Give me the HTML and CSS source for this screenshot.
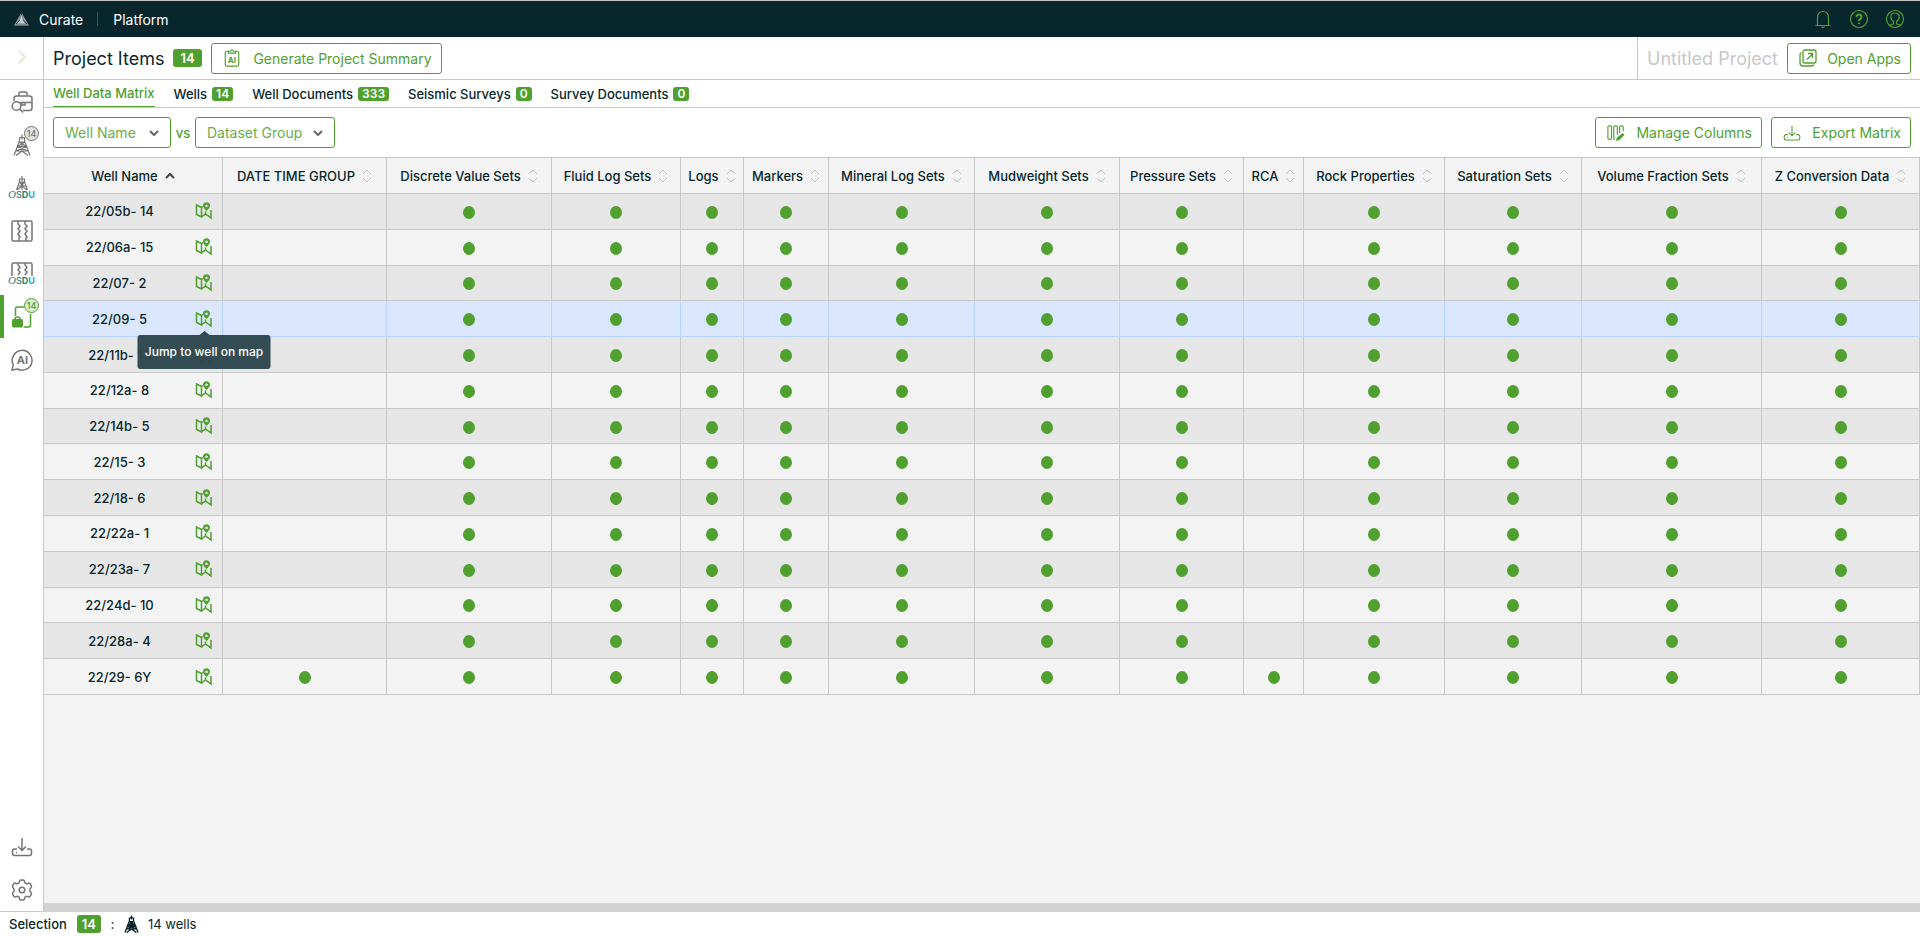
FILE: index.html
```html
<!DOCTYPE html>
<html lang="en">

<head>
  <meta charset="UTF-8">
  <meta name="viewport" content="width=device-width, initial-scale=1.0">
  <title>Curate</title>
  <link rel="stylesheet" href="styles.css">
</head>
<body>
  <!-- Shared icons -->
  <svg class="sprite" aria-hidden="true">
    <symbol id="derrick" viewBox="0 0 18 22">
      <path d="M6.500 3.500h5M9 .5v5M6.500 3.500v3.500L1 21.500M11.500 3.500v3.500L17 21.500M5.500 8h7M4.500 12.500h9M3 17h12M12 8l-7.500 4.500L15 17M6 8l7.500 4.500L3 17M9 8v4.500M3 21.500L9 17l6 4.500" />
    </symbol>
    <symbol id="export" viewBox="0 0 22 20">
      <path d="M11 1v12M7 9.500l4 4 4-4M6 12H3.500Q1.500 12 1.500 14v2.500q0 2 2 2h15q2 0 2-2V14q0-2-2-2H16M5 15.500h1" />
    </symbol>
    <symbol id="map" viewBox="0 0 18 18">
      <path d="M6.500 15L1.500 12.500V3L6.500 5.500zM6.500 15l4-3 5.500 4V8M10.500 12V9.500M6.500 5.500L8 4.500M13.500 14l2.500 2" />
      <path class="solid" fill-rule="evenodd" d="M11.500 9Q8 5.800 8 3.800a3.500 3.500 0 0 1 7 0Q15 5.800 11.500 9zM11.500 2.500a1.300 1.300 0 1 0 .01 0z" />
    </symbol>
    <symbol id="sort" viewBox="0 0 10 14">
      <path d="M1 5l4-4 4 4M1 9l4 4 4-4" />
    </symbol>
    <symbol id="chevron" viewBox="0 0 10 6">
      <path d="M1 1l4 4 4-4" />
    </symbol>
  </svg>

  <!-- Top Bar -->
  <header class="topbar">
    <svg class="logo" viewBox="0 0 16 14"><path d="M8 0L6 8 0 14z" fill="#8d9da1"/><path d="M8 0l2 8 6 6z" fill="#8d9da1"/><path d="M7.500 3h1l1.500 6 3 3H3l3-3z" fill="#c4cdcf"/><path d="M1 12.500h14L16 14H0z" fill="#a7b3b6"/></svg>
    <a href="#">Curate</a>
    <span class="divider"></span>
    <a href="#">Platform</a>
    <div class="topbar-icons">
      <button aria-label="Notifications"><svg viewBox="0 0 20 20"><path d="M2.500 16.500h15M4.500 16.500V9q0-6.500 5.500-6.500T15.500 9v7.500M8.500 17.500q1.500 2 3 0"/></svg></button>
      <button aria-label="Help"><svg viewBox="0 0 20 20"><circle cx="10" cy="10" r="8.500"/><path class="thick" d="M7.500 8q0-2.500 2.500-2.500T12.500 8Q12.500 9 11.300 9.800T10 12M10 13.500v1.500"/></svg></button>
      <button aria-label="Account"><svg viewBox="0 0 20 20"><circle cx="10" cy="10" r="8.500"/><path d="M4.500 16.200q1.500-.7 4-1.200v-2.500Q5.800 11 5.800 7.800q0-3.800 4.200-3.800t4.200 3.800q0 3.200-2.700 4.700V15q2.500.5 4 1.200"/></svg></button>
    </div>
  </header>

  <div class="main">
    <!-- Side Bar -->
    <nav class="sidebar">
      <button class="expand" aria-label="Expand"><svg viewBox="0 0 8 14"><path d="M1 1l6 6-6 6"/></svg></button>
      <button class="side-item" aria-label="Search">
        <svg viewBox="0 0 22 22"><path d="M8 5V2.500Q8 1 9.500 1h5Q16 1 16 2.500V5M3 10V7.500Q3 5 5.500 5h13Q21 5 21 7.500V17q0 2.500-2.500 2.500H12M9 11.500h12M11 11.500v2.500h3v-2.500M8.500 18l3.500 3.500"/><circle cx="5.500" cy="15" r="4.300"/></svg>
      </button>
      <button class="side-item" aria-label="Wells">
        <svg class="tower"><use href="#derrick"/></svg>
        <span class="count">14</span>
      </button>
      <button class="side-item stacked" aria-label="OSDU wells">
        <svg class="tower-small" viewBox="0 0 14 14"><path d="M4 3h6M7 0v5M4.500 3v3L1.500 14M9.500 3v3l3 8M4 6h6M3 10h8M5 6l2 4 2-4M7 6v8M2 14l5-4 5 4"/></svg>
        <span class="osdu"><i>O</i>S<b>D</b><b class="u">U</b></span>
      </button>
      <button class="side-item" aria-label="Seismic">
        <svg viewBox="0 0 22 22"><rect x="1" y="1" width="20" height="20" rx="1.500"/><path d="M7 1v3l2 2-2 3 2 2-2 3 2 3-1 1v3M14 1v3l2 2-2 3 2 2-2 3 2 3-1 1v3"/></svg>
      </button>
      <button class="side-item stacked" aria-label="OSDU seismic">
        <svg class="half" viewBox="0 0 22 14"><path d="M1 14V2.500Q1 1 2.500 1h17Q21 1 21 2.500V14M7 1v2l2 2-2 3 2 2-2 3M14 1v2l2 2-2 3 2 2-2 3"/></svg>
        <span class="osdu"><i>O</i>S<b>D</b><b class="u">U</b></span>
      </button>
      <button class="side-item active" aria-label="Project items">
        <svg viewBox="0 0 22 22"><path d="M4.500 10V3Q4.500 1 6.500 1H13M19.500 8v11q0 2-2 2H13M4 14v-1q0-2 2.500-2T9 13v1"/><rect class="solid" x="1" y="13" width="11" height="8.500" rx="1.500"/></svg>
        <span class="count">14</span>
      </button>
      <button class="side-item" aria-label="Assistant">
        <svg viewBox="0 0 22 22"><path d="M1 21l1.200-5.500A9.900 9.900 0 1 1 6.500 20z"/><text x="11.500" y="15">AI</text></svg>
      </button>
      <span class="spacer"></span>
      <button class="side-item" aria-label="Export">
        <svg class="export"><use href="#export"/></svg>
      </button>
      <button class="side-item" aria-label="Settings">
        <svg viewBox="0 0 22 22"><path d="M8.500 2.500Q8.500 1 10 1h2q1.500 0 1.500 1.500 0 1.500 1.500 2 1 .5 2-.2 1.500-.7 2.300.5l1 1.800q.7 1.300-.5 2.200-1 .7-1 2.200t1 2.200q1.200.9.500 2.200l-1 1.800q-.8 1.200-2.300.5-1-.7-2-.2-1.500.5-1.500 2Q13.500 21 12 21h-2q-1.500 0-1.500-1.500 0-1.500-1.500-2-1-.5-2 .2-1.500.7-2.300-.5l-1-1.800q-.7-1.300.5-2.200 1-.7 1-2.200t-1-2.200Q1 7.900 1.700 6.600l1-1.800Q3.500 3.600 5 4.300q1 .7 2 .2 1.500-.5 1.500-2z"/><circle cx="11" cy="11" r="2.800"/></svg>
      </button>
    </nav>

    <main class="content">
      <div class="title-row">
        <h1>Project Items</h1>
        <span class="badge large">14</span>
        <button class="btn generate">
          <svg viewBox="0 0 18 20"><path d="M5 2.500H3.500q-2 0-2 2V17q0 2 2 2h11q2 0 2-2V4.500q0-2-2-2H13M5 4.500h8V2.500h-2Q9-.5 7 2.500H5z"/><text x="9" y="15">AI</text></svg>
          Generate Project Summary
        </button>
        <div class="project">
          <span class="project-name">Untitled Project</span>
          <button class="btn open">
            <svg viewBox="0 0 18 18"><rect x="4" y="1" width="13" height="13" rx="2"/><path d="M2.500 3.500Q1 4 1 6v8q0 3 3 3h8.500q2 0 2.500-1.500M8 10.500L13.500 5M9 4.500h4.500V9"/></svg>
            Open Apps
          </button>
        </div>
      </div>

      <div class="tabs">
        <a class="selected" href="#">Well Data Matrix</a>
        <a href="#">Wells <span class="badge">14</span></a>
        <a href="#">Well Documents <span class="badge">333</span></a>
        <a href="#">Seismic Surveys <span class="badge">0</span></a>
        <a href="#">Survey Documents <span class="badge">0</span></a>
      </div>

      <div class="toolbar">
        <span class="select rows">
          <select aria-label="Rows"><option>Well Name</option></select>
          <svg><use href="#chevron"/></svg>
        </span>
        <span class="vs">vs</span>
        <span class="select columns">
          <select aria-label="Columns"><option>Dataset Group</option></select>
          <svg><use href="#chevron"/></svg>
        </span>
        <div class="actions">
          <button class="btn manage">
            <svg viewBox="0 0 20 18"><rect x="1" y="1" width="4" height="15" rx="1.500"/><path d="M11.500 11V2.500Q11.500 1 10 1H9Q7.500 1 7.500 2.500v12Q7.500 16 9 16M18 7V2.500Q18 1 16.500 1h-1Q14 1 14 2.500V9"/><path class="solid" d="M10 18l1-4 6.500-5 2 2L13.500 17z"/></svg>
            Manage Columns
          </button>
          <button class="btn export-matrix">
            <svg><use href="#export"/></svg>
            Export Matrix
          </button>
        </div>
      </div>

      <div class="matrix-wrap">
        <table class="matrix">
          <colgroup id="cols"></colgroup>
          <thead><tr id="head"></tr></thead>
          <tbody id="rows"></tbody>
        </table>
      </div>
      <div class="scrollbar"></div>
    </main>
  </div>

  <!-- Status Bar -->
  <footer class="status">
    <span>Selection</span>
    <span class="badge large">14</span>
    <span class="colon">:</span>
    <svg><use href="#derrick"/></svg>
    <span class="wells">14 wells</span>
  </footer>

  <script src="script.js"></script>
</body>
</html>
```

FILE: styles.css
```css
* {
  box-sizing: border-box;
}

body {
  font-family: Inter, sans-serif;
  font-size: 13px;
  font-weight: 500;
  margin: 0;
  display: flex;
  flex-direction: column;
  height: 100vh;
  color: #08272d;
  background-color: white;
}

button, select {
  font: inherit;
  color: inherit;
  cursor: pointer;
}

button {
  background: none;
  border: none;
  padding: 0;
}

a {
  color: inherit;
  text-decoration: none;
}

svg {
  fill: none;
  stroke: currentColor;
  flex: none;
}

svg text {
  fill: currentColor;
  stroke: none;
  font-size: 11px;
  font-weight: 700;
  text-anchor: middle;
}

.solid {
  fill: currentColor;
  stroke: none;
}

.sprite {
  display: none;
}

/* Top bar */
.topbar {
  display: flex;
  align-items: center;
  height: 37px;
  padding: 0 15px 0 14px;
  border-top: 1px solid #c8c8c8;
  background-color: #08272d;
  color: white;
}

.topbar a {
  font-size: 14px;
  font-weight: 400;
}

.logo {
  width: 15px;
  height: 14px;
  margin-right: 10px;
  stroke: none;
}

.divider {
  width: 1px;
  height: 14px;
  margin: 0 15px 0 14px;
  background-color: #3b5157;
}

.topbar-icons {
  display: flex;
  gap: 16px;
  margin-left: auto;
  color: #50a02f;
}

.topbar-icons svg {
  display: block;
  width: 20px;
  height: 20px;
  stroke-width: 1.2;
}

.topbar-icons .thick {
  stroke-width: 2;
}

.main {
  display: flex;
  flex: 1;
  min-height: 0;
}

/* Side bar */
.sidebar {
  display: flex;
  flex-direction: column;
  width: 44px;
  border-right: 1px solid #c8c8c8;
  border-bottom: 1px solid #c8c8c8;
  color: #757575;
}

.expand {
  height: 43px;
  border-bottom: 1px solid #c8c8c8;
  color: #dcebd5;
}

.expand svg {
  width: 8px;
  height: 14px;
  stroke-width: 2;
}

.side-item {
  position: relative;
  display: flex;
  align-items: center;
  justify-content: center;
  height: 43px;
}

.side-item svg {
  width: 22px;
  height: 22px;
  stroke-width: 1.5;
}

.side-item .tower {
  width: 18px;
  stroke-width: 1.2;
}

.side-item.active {
  color: #50a02f;
  border-left: 4px solid #50a02f;
  padding-right: 4px;
}

.side-item .export {
  height: 20px;
}

.side-item.stacked {
  flex-direction: column;
}

.side-item .tower-small {
  width: 14px;
  height: 14px;
  stroke-width: 1.2;
}

.side-item .half {
  height: 14px;
}

.osdu {
  font-size: 9px;
  line-height: 9px;
  color: #2f7f86;
}

.osdu i {
  font-family: "Liberation Serif", serif;
  font-size: 11px;
}

.osdu b {
  color: #108a6c;
}

.osdu .u {
  color: #10a8e0;
}

.count {
  position: absolute;
  top: 3px;
  right: 4px;
  width: 15px;
  height: 15px;
  border: 1px solid #757575;
  border-radius: 50%;
  background-color: #e2e2e2;
  font-size: 9px;
  line-height: 13px;
  text-align: center;
}

.active .count {
  border-color: #50a02f;
  background-color: #dcebd5;
}

.spacer {
  flex: 1;
}

/* Content */
.content {
  display: flex;
  flex-direction: column;
  flex: 1;
  min-width: 0;
}

.title-row {
  display: flex;
  align-items: center;
  height: 43px;
  padding: 0 9px;
  border-bottom: 1px solid #c8c8c8;
}

h1 {
  margin: 0 9px 0 0;
  font-size: 18px;
  font-weight: 400;
}

.badge {
  display: inline-block;
  padding: 0 4px;
  border-radius: 3px;
  background-color: #50a02f;
  color: white;
  font-size: 12px;
  font-weight: 600;
  line-height: 14px;
}

.badge.large {
  padding: 0 5px;
  font-size: 13px;
  line-height: 18px;
}

.title-row .badge {
  margin-right: 9px;
  padding: 0 7px;
}

.btn {
  display: flex;
  align-items: center;
  justify-content: space-between;
  height: 31px;
  padding: 0 9px 0 11px;
  border: 1px solid #50a02f;
  border-radius: 3px;
  color: #50a02f;
  font-size: 14px;
  font-weight: 400;
  white-space: nowrap;
}

.btn svg {
  width: 18px;
  height: 18px;
  stroke-width: 1.3;
}

.btn svg text {
  font-size: 9px;
}

.generate {
  min-width: 231px;
}

.open {
  min-width: 124px;
}

.manage {
  min-width: 167px;
}

.export-matrix {
  min-width: 140px;
}

.project {
  display: flex;
  align-items: center;
  align-self: stretch;
  gap: 9px;
  margin-left: auto;
  padding-left: 9px;
  border-left: 1px solid #c8c8c8;
}

.project-name {
  font-size: 18px;
  font-weight: 400;
  color: #c8c8c8;
}

.tabs {
  display: flex;
  gap: 19px;
  height: 28px;
  padding: 0 9px;
  border-bottom: 1px solid #c8c8c8;
}

.tabs a {
  display: flex;
  align-items: center;
  gap: 5px;
}

.tabs .selected {
  color: #50a02f;
  border-bottom: 1px solid #50a02f;
}

.toolbar {
  display: flex;
  align-items: center;
  height: 49px;
  padding: 0 9px;
  color: #50a02f;
}

.select {
  position: relative;
}

.select select {
  appearance: none;
  display: block;
  width: 100%;
  height: 31px;
  padding: 0 11px;
  border: 1px solid #50a02f;
  border-radius: 3px;
  background-color: white;
  color: #6aad4d;
  font-size: 14px;
  font-weight: 400;
}

.select svg {
  position: absolute;
  top: 13px;
  right: 12px;
  width: 10px;
  height: 6px;
  color: #666;
  stroke-width: 2;
  pointer-events: none;
}

.rows {
  width: 118px;
}

.columns {
  width: 140px;
}

.vs {
  width: 24px;
  text-align: center;
}

.actions {
  display: flex;
  gap: 9px;
  margin-left: auto;
}

/* Matrix */
.matrix-wrap {
  flex: 1;
  background-color: #f3f3f3;
}

.matrix {
  width: 100%;
  height: 538px;
  table-layout: fixed;
  border-collapse: separate;
  border-spacing: 0;
  border-top: 1px solid #c8c8c8;
}

.matrix th,
.matrix td {
  height: 35px;
  padding: 0;
  border-right: 1px solid #c8c8c8;
  border-bottom: 1px solid #c8c8c8;
  font-weight: 500;
  text-align: center;
  white-space: nowrap;
}

.matrix th {
  height: 36px;
}

.matrix th button {
  display: inline-flex;
  align-items: center;
  gap: 7px;
}

.matrix th svg {
  width: 10px;
  height: 14px;
  color: #c0c0c0;
}

.matrix th .ascending {
  height: 6px;
  color: #444;
  stroke-width: 2;
  transform: rotate(180deg);
}

.matrix tbody tr:nth-child(odd) {
  background-color: #e6e6e6;
}

.matrix tbody .hovered {
  background-color: #dbe7fe;
}

.matrix .hovered td {
  border-color: #b9d4fb;
}

.well {
  display: flex;
  align-items: center;
  padding-right: 9px;
}

.well-name {
  flex: 1;
}

.jump {
  position: relative;
  display: block;
  color: #50a02f;
}

.jump svg {
  display: block;
  width: 18px;
  height: 18px;
  stroke-width: 1.5;
}

.tooltip {
  position: absolute;
  top: 25px;
  left: 50%;
  z-index: 1;
  min-width: 133px;
  padding: 0 7px;
  border-radius: 3px;
  background-color: rgba(45, 71, 78, 0.97);
  color: white;
  font-size: 12px;
  line-height: 34px;
  transform: translateX(-50%);
}

.tooltip::before {
  content: "";
  position: absolute;
  top: -4px;
  left: 50%;
  margin-left: -5px;
  border: 5px solid transparent;
  border-top: none;
  border-bottom: 4px solid #2d474e;
}

.dot {
  display: block;
  width: 12px;
  height: 13px;
  margin: 2px auto 0;
  border-radius: 50%;
  background-color: #50a02f;
}

.scrollbar {
  height: 9px;
  background-color: #d2d2d2;
}

/* Status bar */
.status {
  display: flex;
  align-items: center;
  height: 24px;
  padding: 0 9px;
}

.status .badge {
  margin-left: 10px;
}

.status .colon {
  width: 23px;
  text-align: center;
}

.status svg {
  width: 15px;
  height: 18px;
  stroke-width: 1.6;
}

.status .wells {
  margin-left: 9px;
  font-weight: 400;
}
```

FILE: script.js
```js
// column title and relative width
const columns = [
  ['Well Name', 179],
  ['DATE TIME GROUP', 164],
  ['Discrete Value Sets', 165],
  ['Fluid Log Sets', 129],
  ['Logs', 63],
  ['Markers', 85],
  ['Mineral Log Sets', 146],
  ['Mudweight Sets', 145],
  ['Pressure Sets', 124],
  ['RCA', 60],
  ['Rock Properties', 141],
  ['Saturation Sets', 137],
  ['Volume Fraction Sets', 180],
  ['Z Conversion Data', 158],
];

const wells = [
  '22/05b- 14', '22/06a- 15', '22/07- 2', '22/09- 5', '22/11b- 13',
  '22/12a- 8', '22/14b- 5', '22/15- 3', '22/18- 6', '22/22a- 1',
  '22/23a- 7', '22/24d- 10', '22/28a- 4', '22/29- 6Y',
];

// these two only have data for the last well
const sparse = ['DATE TIME GROUP', 'RCA'];
const hovered = '22/09- 5';
const total = columns.reduce((sum, column) => sum + column[1], 0);

document.getElementById('cols').innerHTML = columns
  .map(([, width]) => `<col style="width: ${width / total * 100}%">`)
  .join('');

document.getElementById('head').innerHTML = columns
  .map(([title], i) => {
    const icon = i === 0
      ? '<svg class="ascending"><use href="#chevron"/></svg>'
      : '<svg><use href="#sort"/></svg>';
    return `<th scope="col"><button>${title}${icon}</button></th>`;
  })
  .join('');

document.getElementById('rows').innerHTML = wells
  .map((well) => {
    const tooltip = well === hovered ? '<span class="tooltip">Jump to well on map</span>' : '';
    const cells = columns.slice(1).map(([title]) => {
      const hasData = !sparse.includes(title) || well === '22/29- 6Y';
      return `<td>${hasData ? '<span class="dot"></span>' : ''}</td>`;
    }).join('');
    return `<tr class="${well === hovered ? 'hovered' : ''}">
      <td><div class="well">
        <span class="well-name">${well}</span>
        <button class="jump" aria-label="Jump to well on map"><svg><use href="#map"/></svg>${tooltip}</button>
      </div></td>${cells}</tr>`;
  })
  .join('');
```
